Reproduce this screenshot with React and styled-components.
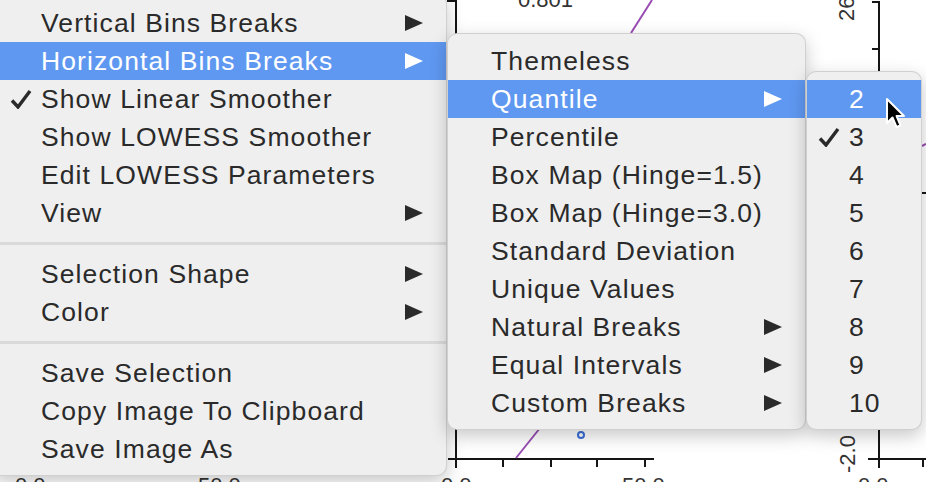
import React from 'react';
import styled, { createGlobalStyle } from 'styled-components';

const GlobalStyle = createGlobalStyle`
  html, body {
    margin: 0;
    padding: 0;
    background: #ffffff;
  }
  body {
    font-family: 'Liberation Sans', Arial, sans-serif;
  }
`;

const Page = styled.div`
  background: #ffffff;
  height: 482px;
  overflow: hidden;
  position: relative;
  width: 926px;
`;

const Chart = styled.svg`
  height: 482px;
  left: 0;
  position: absolute;
  top: 0;
  width: 926px;
`;

const MenuRow = styled.div`
  align-items: flex-start;
  display: flex;
  position: relative;
  z-index: 1;
`;

const Menu = styled.div`
  background: #efefef;
  border: 1px solid rgba(0, 0, 0, 0.13);
  border-radius: 10px;
  box-shadow: 0 6px 18px rgba(0, 0, 0, 0.22);
  box-sizing: border-box;
  display: flex;
  flex-direction: column;
  flex-shrink: 0;
  margin-left: ${({ $left = 0 }) => $left}px;
  margin-top: ${({ $top }) => $top}px;
  padding: ${({ $padTop = 8 }) => $padTop}px 0 7px;
  width: ${({ $width }) => $width}px;
`;

const Item = styled.div`
  align-items: center;
  background: ${({ $active }) => ($active ? '#5f98f1' : 'transparent')};
  color: ${({ $active }) => ($active ? '#ffffff' : '#2a2a2a')};
  display: grid;
  font-size: 26.5px;
  grid-template-columns: ${({ $gutter }) => $gutter}px 1fr 18px;
  height: 38px;
  letter-spacing: 1.1px;
  line-height: 38px;
  padding-right: 23px;
  white-space: nowrap;
`;

const CheckCell = styled.span`
  display: flex;
  justify-content: flex-end;
  padding-right: 9px;
`;

const Label = styled.span`
  overflow: hidden;
`;

const Separator = styled.div`
  background: #dadada;
  height: 3px;
  margin: 10px 0;
`;

const Cursor = styled.svg`
  height: 36px;
  left: 884px;
  position: absolute;
  top: 96px;
  width: 26px;
  z-index: 2;
`;

const Check = () => (
  <svg width="22" height="20" viewBox="0 0 22 20">
    <path
      d="M2 11.5 L8 18 L20 2"
      fill="none"
      stroke="currentColor"
      strokeWidth="3.4"
      strokeLinejoin="miter"
    />
  </svg>
);

const Arrow = () => (
  <svg width="18" height="16" viewBox="0 0 18 16">
    <polygon points="0,0 18,8 0,16" fill="currentColor" />
  </svg>
);

const MenuItem = ({ label, checked, submenu, active, gutter }) => (
  <Item $active={active} $gutter={gutter}>
    <CheckCell>{checked && <Check />}</CheckCell>
    <Label>{label}</Label>
    {submenu ? <Arrow /> : <span />}
  </Item>
);

const mainItems = [
  [
    { label: 'Vertical Bins Breaks', submenu: true },
    { label: 'Horizontal Bins Breaks', submenu: true, active: true },
    { label: 'Show Linear Smoother', checked: true },
    { label: 'Show LOWESS Smoother' },
    { label: 'Edit LOWESS Parameters' },
    { label: 'View', submenu: true },
  ],
  [
    { label: 'Selection Shape', submenu: true },
    { label: 'Color', submenu: true },
  ],
  [
    { label: 'Save Selection' },
    { label: 'Copy Image To Clipboard' },
    { label: 'Save Image As' },
  ],
];

const themeItems = [
  { label: 'Themeless' },
  { label: 'Quantile', submenu: true, active: true },
  { label: 'Percentile' },
  { label: 'Box Map (Hinge=1.5)' },
  { label: 'Box Map (Hinge=3.0)' },
  { label: 'Standard Deviation' },
  { label: 'Unique Values' },
  { label: 'Natural Breaks', submenu: true },
  { label: 'Equal Intervals', submenu: true },
  { label: 'Custom Breaks', submenu: true },
];

const countItems = [2, 3, 4, 5, 6, 7, 8, 9, 10].map((n) => ({
  label: String(n),
  active: n === 2,
  checked: n === 3,
}));

const axis = { stroke: '#151515', strokeWidth: 2, fill: 'none' };
const purple = { stroke: '#9a4cb3', strokeWidth: 2 };
const tickText = {
  fontFamily: "'Liberation Sans', Arial, sans-serif",
  fontSize: 22,
  fill: '#333',
};

const Background = () => (
  <Chart viewBox="0 0 926 482">
    {/* middle plot */}
    <path d="M447 1 H456 V468" {...axis} />
    <path d="M448 459 H654" {...axis} />
    {[503, 551, 597, 645].map((x) => (
      <line key={x} x1={x} y1={459} x2={x} y2={467} {...axis} />
    ))}
    <line x1="652" y1="0" x2="631" y2="33" {...purple} />
    <line x1="540" y1="428" x2="516" y2="458" {...purple} />
    <circle cx="581" cy="435" r="3" fill="#fff" stroke="#3a6fd8" strokeWidth="2" />
    <text x="518" y="7" {...tickText}>0.801</text>

    {/* right plot */}
    <path d="M872 2 H879 V468" {...axis} />
    <line x1="872" y1="49" x2="879" y2="49" {...axis} />
    <path d="M868 459 H926" {...axis} />
    <line x1="923" y1="459" x2="923" y2="467" {...axis} />
    <line x1="920" y1="193" x2="926" y2="193" {...axis} />
    <line x1="922" y1="146" x2="926" y2="144" {...purple} />
    <text x="854" y="21" transform="rotate(-90 854 21)" {...tickText}>26.0</text>
    <text x="855" y="473" transform="rotate(-90 855 473)" {...tickText}>-2.0</text>

    {/* bottom labels */}
    <text x="15" y="493" {...tickText}>0.0</text>
    <text x="198" y="493" {...tickText}>50.0</text>
    <text x="441" y="493" {...tickText}>0.0</text>
    <text x="622" y="493" {...tickText}>50.0</text>
    <text x="858" y="493" {...tickText}>0.0</text>
  </Chart>
);

const App = () => (
  <Page>
    <GlobalStyle />
    <Background />
    <MenuRow>
      <Menu $left={-8} $top={-6} $padTop={9} $width={455}>
        {mainItems.map((group, gi) => (
          <React.Fragment key={gi}>
            {gi > 0 && <Separator />}
            {group.map((it) => (
              <MenuItem key={it.label} gutter={48} {...it} />
            ))}
          </React.Fragment>
        ))}
      </Menu>
      <Menu $top={33} $width={359}>
        {themeItems.map((it) => (
          <MenuItem key={it.label} gutter={43} {...it} />
        ))}
      </Menu>
      <Menu $top={71} $width={116}>
        {countItems.map((it) => (
          <MenuItem key={it.label} gutter={42} {...it} />
        ))}
      </Menu>
    </MenuRow>
    <Cursor viewBox="0 0 26 36">
      <path
        d="M3 3 L3 27 L8.5 21.5 L12.5 31 L16.5 29.3 L12.6 20 L20 20 Z"
        fill="#000"
        stroke="#fff"
        strokeWidth="2"
        strokeLinejoin="round"
      />
    </Cursor>
  </Page>
);

export default App;
